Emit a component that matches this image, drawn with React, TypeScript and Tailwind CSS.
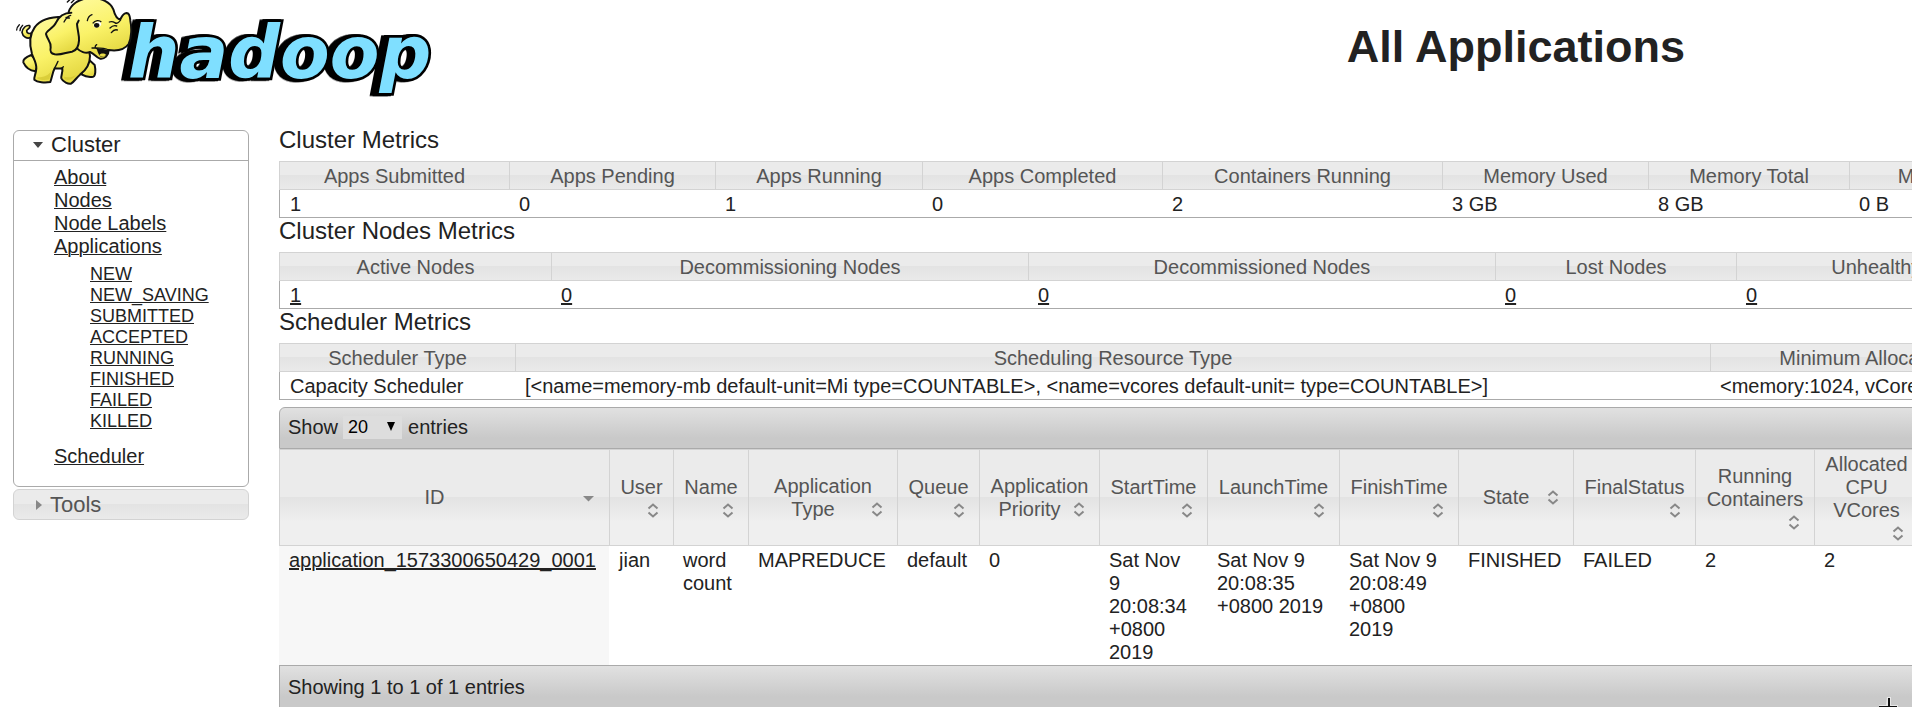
import { useState } from "react";

const appStates = ["NEW", "NEW_SAVING", "SUBMITTED", "ACCEPTED", "RUNNING", "FINISHED", "FAILED", "KILLED"];

type Column = { label: string; value: string; width: string };

const clusterMetrics: Column[] = [
  { label: "Apps Submitted", value: "1", width: "w-[230px]" },
  { label: "Apps Pending", value: "0", width: "w-[206px]" },
  { label: "Apps Running", value: "1", width: "w-[207px]" },
  { label: "Apps Completed", value: "0", width: "w-[240px]" },
  { label: "Containers Running", value: "2", width: "w-[280px]" },
  { label: "Memory Used", value: "3 GB", width: "w-[206px]" },
  { label: "Memory Total", value: "8 GB", width: "w-[201px]" },
  { label: "Memory Reserved", value: "0 B", width: "w-[260px]" },
];

const nodeMetrics: Column[] = [
  { label: "Active Nodes", value: "1", width: "w-[272px]" },
  { label: "Decommissioning Nodes", value: "0", width: "w-[477px]" },
  { label: "Decommissioned Nodes", value: "0", width: "w-[467px]" },
  { label: "Lost Nodes", value: "0", width: "w-[241px]" },
  { label: "Unhealthy Nodes", value: "0", width: "w-[343px]" },
];

const schedulerMetrics: Column[] = [
  { label: "Scheduler Type", value: "Capacity Scheduler", width: "w-[236px]" },
  {
    label: "Scheduling Resource Type",
    value: "[<name=memory-mb default-unit=Mi type=COUNTABLE>, <name=vcores default-unit= type=COUNTABLE>]",
    width: "w-[1195px]",
  },
  { label: "Minimum Allocation", value: "<memory:1024, vCores:1>", width: "w-[310px]" },
];

const appColumns: Column[] = [
  { label: "ID", value: "application_1573300650429_0001", width: "w-[330px]" },
  { label: "User", value: "jian", width: "w-[64px]" },
  { label: "Name", value: "word count", width: "w-[75px]" },
  { label: "Application Type", value: "MAPREDUCE", width: "w-[149px]" },
  { label: "Queue", value: "default", width: "w-[82px]" },
  { label: "Application Priority", value: "0", width: "w-[120px]" },
  { label: "StartTime", value: "Sat Nov 9 20:08:34 +0800 2019", width: "w-[108px]" },
  { label: "LaunchTime", value: "Sat Nov 9 20:08:35 +0800 2019", width: "w-[132px]" },
  { label: "FinishTime", value: "Sat Nov 9 20:08:49 +0800 2019", width: "w-[119px]" },
  { label: "State", value: "FINISHED", width: "w-[115px]" },
  { label: "FinalStatus", value: "FAILED", width: "w-[122px]" },
  { label: "Running Containers", value: "2", width: "w-[119px]" },
  { label: "Allocated CPU VCores", value: "2", width: "w-[104px]" },
];

const glass = "bg-[linear-gradient(#ebebeb_calc(50%-1px),#e3e3e3_50%,#efefef_calc(50%+24px))]";
const bar = "bg-[linear-gradient(#e1e1e1,#c9c9c9_75%,#c9c9c9)]";

function Logo() {
  return (
    <svg viewBox="0 0 1320 330" className="h-[110px] w-[440px] shrink-0 overflow-hidden" role="img" aria-label="Hadoop">
      <defs>
        <linearGradient id="skin" x1="0" y1="0" x2="0.4" y2="1">
          <stop offset="0" stopColor="#fffba0" />
          <stop offset="0.6" stopColor="#faf268" />
          <stop offset="1" stopColor="#e6da45" />
        </linearGradient>
      </defs>
      <text
        x="384"
        y="235"
        fontSize="217"
        strokeWidth="16"
        strokeLinejoin="miter"
        className="fill-[#7fdfff] stroke-black font-['DejaVu_Sans'] font-bold italic [filter:drop-shadow(-9px_1px_0_#000)_drop-shadow(-9px_0_0_#000)] [paint-order:stroke]"
      >
        hadoop
      </text>
      <g fill="url(#skin)" stroke="#111" strokeWidth="6" strokeLinejoin="round" strokeLinecap="round">
        <path d="M92 112 C82 118 68 110 66 97 C68 84 78 74 89 77 C93 84 84 86 80 92 C80 100 88 102 94 99 Z" strokeWidth="5" />
        <path d="M94 165 C76 172 68 180 70 187 C76 200 90 212 106 214 L116 190 Z" />
        <path d="M262 175 L284 195 C288 212 286 228 280 230 C268 232 254 229 246 224 L240 200 Z" />
        <path d="M190 50 C150 50 118 62 104 82 C88 104 88 134 96 162 C102 178 110 190 109 205 C108 222 101 232 103 239 C112 247 134 249 151 246 C156 232 158 216 164 205 C172 206 180 205 187 205 C189 218 182 228 184 235 C190 247 204 252 213 251 C224 244 230 232 240 224 C256 212 270 194 270 168 L262 120 Z" />
        <path d="M206 36 C212 14 236 -4 270 -6 C304 -8 332 8 340 28 C344 44 352 58 361 58 C366 50 368 40 380 39 C390 40 390 52 391 62 C396 84 394 116 386 132 C376 146 354 154 326 150 C326 166 314 178 300 176 C288 172 284 162 270 156 C256 162 240 154 232 146 Z" />
        <path d="M214 38 C190 38 176 50 168 68 C160 86 138 92 138 102 C142 120 154 126 152 142 C150 152 150 160 164 163 C184 166 200 156 216 155 C230 152 236 140 237 122 C238 104 232 90 231 72 L236 62" />
      </g>
      <g fill="none" stroke="#111" strokeWidth="4" strokeLinecap="round" strokeLinejoin="round">
        <path d="M192 66 C198 54 204 48 212 46 M198 52 L208 54" />
        <path d="M50 90 C50 82 54 78 58 74 M60 92 C60 84 64 80 68 76" />
        <path d="M202 6 C206 2 210 -2 216 -6 M214 8 L222 0" />
        <path d="M262 62 C264 52 270 46 276 44" />
        <path d="M328 66 C338 62 344 68 348 70 M330 84 C338 76 344 76 350 78 M334 98 C340 90 346 88 352 90" />
        <path d="M276 144 C290 144 310 142 326 150 M290 134 C284 138 284 144 290 146" />
        <path d="M362 60 C358 66 352 70 348 70" />
        <path d="M184 206 L190 200 M164 204 C168 196 172 190 174 184" />
      </g>
      <path d="M290 144 C304 148 316 146 326 151 C324 164 314 172 302 170 C294 162 292 154 290 144 Z" fill="#111" />
      <path d="M298 165 C304 158 314 160 318 164 C312 171 304 172 298 165 Z" fill="#e8dc4a" />
      <ellipse cx="292" cy="74" rx="12" ry="8" transform="rotate(-25 292 74)" fill="#fff" />
      <ellipse cx="290" cy="76" rx="8" ry="7" fill="#111" />
      <path d="M278 70 C286 60 298 60 304 66" fill="none" stroke="#111" strokeWidth="4" />
      <path d="M112 236 C122 240 136 241 148 238 L154 212 C146 226 132 232 112 232 Z M194 238 C206 244 218 238 228 226 C216 232 206 234 192 230 Z" fill="#cfc22c" opacity="0.6" />
    </svg>
  );
}

function SortIcon({ sorted }: { sorted: boolean }) {
  return (
    <svg viewBox="0 0 20 20" className="float-right size-5 translate-y-0.5" aria-hidden="true">
      {sorted ? (
        <path d="M3 8h11l-5.500 5.500z" fill="#888" />
      ) : (
        <path d="M4.500 7.500l4.500-4 4.500 4M4.500 11.500l4.500 4 4.500-4" fill="none" stroke="#888" strokeWidth="2" />
      )}
    </svg>
  );
}

function MetricsTable({ title, columns, links = false }: { title: string; columns: Column[]; links?: boolean }) {
  return (
    <section>
      <h2 className="pb-2 text-[24px] leading-[26px]">{title}</h2>
      <table className="w-0 min-w-full table-fixed border-separate border-spacing-0 text-left" aria-label={title}>
        <colgroup>
          {columns.map((c) => (
            <col key={c.label} className={c.width} />
          ))}
        </colgroup>
        <thead>
          <tr>
            {columns.map((c) => (
              <th
                key={c.label}
                className={`${glass} border-y border-l border-[#d3d3d3] pt-[3px] pb-px text-center font-normal whitespace-nowrap text-[#555]`}
              >
                {c.label}
              </th>
            ))}
          </tr>
        </thead>
        <tbody>
          <tr>
            {columns.map((c) => (
              <td
                key={c.label}
                className="border-b border-[#aaa] pt-[3px] pb-px pl-[10px] whitespace-nowrap first:border-l"
              >
                {links ? (
                  <a href="#nodes" className="underline decoration-2">
                    {c.value}
                  </a>
                ) : (
                  c.value
                )}
              </td>
            ))}
          </tr>
        </tbody>
      </table>
    </section>
  );
}

function Sidebar() {
  return (
    <nav className="w-[236px] shrink-0 pt-[3px]">
      <div className="rounded-md border border-[#aaa]">
        <button type="button" className="flex h-[30px] w-full items-center border-b border-[#aaa] pb-0.5 text-[22px]">
          <svg viewBox="0 0 10 6" className="mr-2 ml-[19px] h-[6px] w-[10px]" aria-hidden="true">
            <path d="M0 0h10L5 6z" fill="#454545" />
          </svg>
          Cluster
        </button>
        <ul className="pt-[5px] pb-[18px] pl-10 leading-[23px] underline decoration-1">
          <li><a href="#about">About</a></li>
          <li><a href="#nodes">Nodes</a></li>
          <li><a href="#labels">Node Labels</a></li>
          <li>
            <a href="#apps">Applications</a>
          </li>
          <li className="pt-[6px] pb-[13px] pl-9">
            <ul className="text-[18px] leading-[21px]">
              {appStates.map((s) => (
                <li key={s}><a href="#apps">{s}</a></li>
              ))}
            </ul>
          </li>
          <li><a href="#scheduler">Scheduler</a></li>
        </ul>
      </div>
      <button
        type="button"
        className={`${glass} mt-0.5 flex h-[31px] w-full items-center rounded-md border border-[#d3d3d3] text-[22px] text-[#555]`}
      >
        <svg viewBox="0 0 6 10" className="mr-2 ml-[22px] h-[10px] w-[6px]" aria-hidden="true">
          <path d="M0 0v10l6-5z" fill="#888" />
        </svg>
        Tools
      </button>
    </nav>
  );
}

function Applications() {
  const [sort, setSort] = useState("ID");
  return (
    <section className="mt-[7px] w-max min-w-full">
      <div className={`${bar} flex h-[42px] items-center rounded-tl-md border border-[#aaa] pb-0.5 pl-2`}>
        <label htmlFor="page-size">Show</label>
        <span className="relative mr-[6px] ml-[5px] flex">
          <select
            id="page-size"
            defaultValue="20"
            className="h-[23px] w-[59px] appearance-none bg-[#dddddd] pl-[5px] text-[18px] leading-[23px] text-black"
          >
            <option>20</option>
            <option>40</option>
            <option>60</option>
          </select>
          <svg viewBox="0 0 8 9" className="pointer-events-none absolute top-[6px] right-[7px] h-[9px] w-[8px]" aria-hidden="true">
            <path d="M0 0h8L4 9z" fill="#000" />
          </svg>
        </span>
        <span>entries</span>
      </div>
      <table className="w-0 min-w-full table-fixed border-separate border-spacing-0 text-left" aria-label="Applications">
        <colgroup>
          {appColumns.map((c) => (
            <col key={c.label} className={c.width} />
          ))}
        </colgroup>
        <thead>
          <tr>
            {appColumns.map((c) => (
              <th
                key={c.label}
                className={`${glass} border-y border-l border-[#d3d3d3] px-[9px] py-[3px] font-normal text-[#555]`}
              >
                <button type="button" onClick={() => setSort(c.label)} className="block w-full text-center">
                  {c.label}
                  <SortIcon sorted={sort === c.label} />
                </button>
              </th>
            ))}
          </tr>
        </thead>
        <tbody>
          <tr>
            {appColumns.map((c, i) => (
              <td key={c.label} className="pt-[3px] pr-[11px] pb-px pl-[10px] align-top first:bg-[#f7f7f7]">
                {i === 0 ? (
                  <a href="#app" className="underline decoration-2">
                    {c.value}
                  </a>
                ) : (
                  c.value
                )}
              </td>
            ))}
          </tr>
        </tbody>
      </table>
      <div className={`${bar} flex h-[42px] items-center border-t border-l border-[#aaa] pt-0.5 pl-2`}>
        Showing 1 to 1 of 1 entries
      </div>
    </section>
  );
}

export default function App() {
  return (
    <div className="relative overflow-hidden bg-white font-['Liberation_Sans',Arial,sans-serif] text-[20px] leading-[23px] text-[#222]">
      <header className="flex items-start justify-between pr-[227px]">
        <Logo />
        <h1 className="pt-[22px] text-[45px] leading-[50px] font-bold">All Applications</h1>
      </header>
      <div className="flex gap-[30px] pt-[17px] pl-[13px]">
        <Sidebar />
        <main className="min-w-0 flex-1">
          <MetricsTable title="Cluster Metrics" columns={clusterMetrics} />
          <MetricsTable title="Cluster Nodes Metrics" columns={nodeMetrics} links />
          <MetricsTable title="Scheduler Metrics" columns={schedulerMetrics} />
          <Applications />
        </main>
      </div>
      <svg viewBox="0 0 20 10" className="pointer-events-none absolute right-[14px] bottom-0 h-[10px] w-[20px]" aria-hidden="true">
        <path d="M9 0h4v8h7v2H1V8h7z" fill="#e8e8e8" />
        <path d="M10 1h2v8h7v1H1V9h9z" fill="#111" />
      </svg>
    </div>
  );
}
